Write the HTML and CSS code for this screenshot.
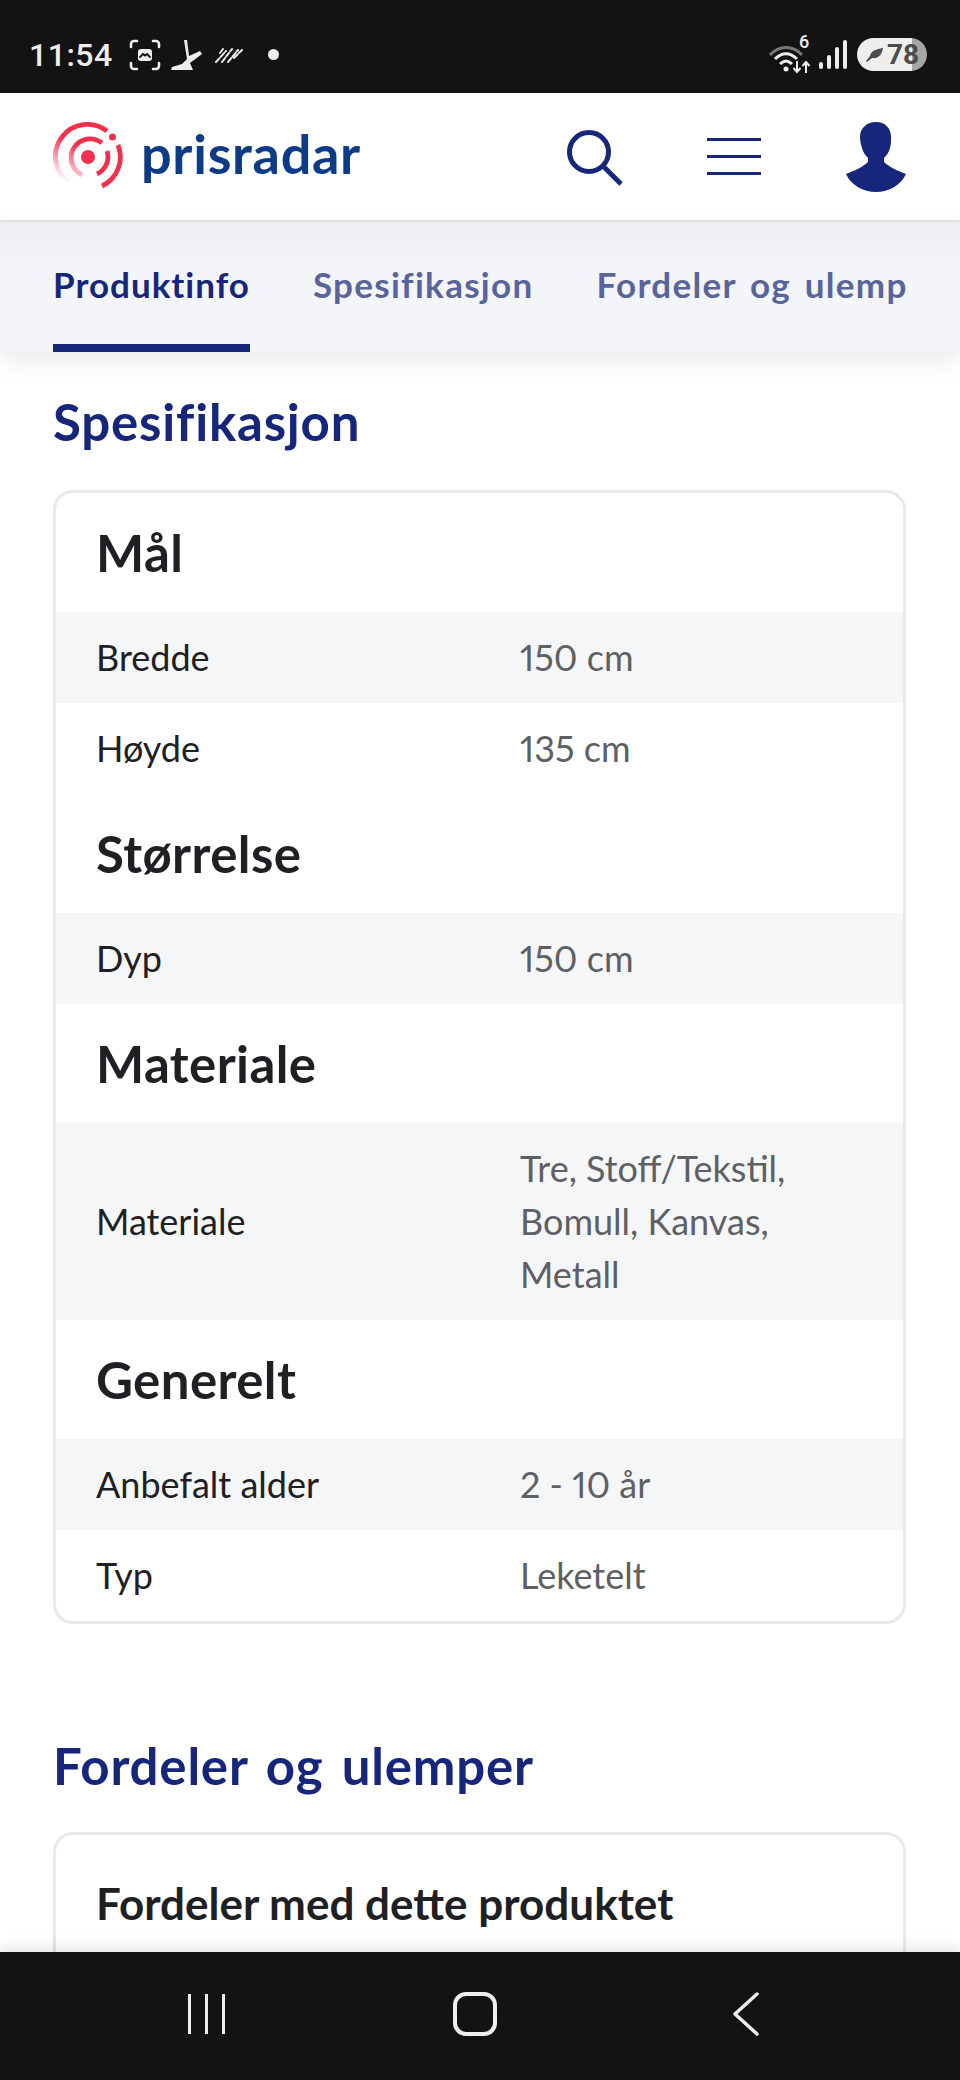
FILE: index.html
```html
<!DOCTYPE html>
<html>
<head>
  <title>Prisradar - Spesifikasjon</title>
  <link rel="stylesheet" href="styles.css">
</head>
<body>
  <div class="phone">
    <!-- Android status bar -->
    <div class="statusbar">
      <span class="clock">11:54</span>
      <svg class="st-shot" viewBox="0 0 32 32" fill="none" stroke="#eee" stroke-width="2.6" stroke-linecap="round">
        <path d="M2 8V5a3 3 0 0 1 3-3h3M24 2h3a3 3 0 0 1 3 3v3M30 24v3a3 3 0 0 1-3 3h-3M8 30H5a3 3 0 0 1-3-3v-3"/>
        <rect x="9" y="10" width="14" height="12" rx="3" fill="#eee" stroke="none"/>
        <path d="M11 18l3-3 2 1.500 2-1.500 3 3" stroke="#131313" stroke-width="1.800"/>
      </svg>
      <svg class="st-figure" viewBox="0 0 32 32" fill="#eee">
        <path d="M14 1L17 1L19 17L30 12L32 15L20 24L23 31L1 31L2 28L12 25L17 20Z"/>
      </svg>
      <svg class="st-stripes" viewBox="0 0 28 16" stroke="#eee" stroke-width="2" stroke-linecap="round" stroke-dasharray="5 2">
        <path d="M1 15L11 4M7 15L17 2M13 15L23 3M19 11L27 3M5 6L8 2"/>
      </svg>
      <span class="st-dot"></span>
      <span class="st-right">
        <svg class="st-wifi" viewBox="0 0 42 30" fill="none">
          <path d="M1 11C10 1 24 1 33 11" stroke="#777" stroke-width="3"/>
          <path d="M6 15C13 8 21 8 28 15" stroke="#eee" stroke-width="3"/>
          <path d="M11 20C15 16 19 16 23 20" stroke="#eee" stroke-width="3"/>
          <circle cx="17" cy="25" r="2.500" fill="#eee"/>
          <path d="M28 17v11m-3.500-4l3.500 4 3.500-4M37 29V18m-3.500 4l3.500-4 3.500 4" stroke="#eee" stroke-width="2"/>
        </svg>
        <span class="st-six">6</span>
        <span class="st-signal">
          <i class="bar bar-1"></i><i class="bar bar-2"></i><i class="bar bar-3"></i><i class="bar bar-4"></i>
        </span>
        <span class="battery">
          <svg class="st-leaf" viewBox="0 0 18 14" fill="#4c4c4c">
            <path d="M5 8C6 3 11 1 18 0 17 7 13 11 7 10L2 14 1 13z"/>
          </svg>
          <span class="battery-level">78</span>
        </span>
      </span>
    </div>

    <!-- Site header -->
    <header class="site-header">
      <div class="logo">
        <svg class="logo-mark" viewBox="0 0 72 72" fill="none" stroke-width="4.800">
          <defs>
            <linearGradient id="fade" gradientUnits="userSpaceOnUse" x1="30" y1="26" x2="12" y2="60">
              <stop offset="0" stop-color="#f1304f"/>
              <stop offset="1" stop-color="#f1304f" stop-opacity="0"/>
            </linearGradient>
          </defs>
          <path d="M55 10A32 32 0 1 0 16 61" stroke="url(#fade)"/>
          <path d="M50 22A19 19 0 1 0 30 54" stroke="url(#fade)"/>
          <path d="M66 24A32 32 0 0 1 50 65" stroke="#f1304f"/>
          <path d="M55 30A19 19 0 0 1 45 53" stroke="#f1304f"/>
          <circle cx="60.500" cy="16" r="3.500" fill="#f1304f"/>
          <circle cx="36" cy="36" r="7" fill="#f1304f"/>
        </svg>
        <span class="logo-text">prisradar</span>
      </div>
      <div class="header-icons">
        <svg class="icon-search" viewBox="0 0 56 56" fill="none" stroke="#16267a" stroke-width="5">
          <circle cx="22" cy="22" r="19.500"/>
          <path d="M36 36l18 18"/>
        </svg>
        <div class="icon-menu"><span></span><span></span><span></span></div>
        <svg class="icon-user" viewBox="0 0 62 72" fill="#16267a">
          <path d="M31 1C40 1 46 7 46 16C46 20 46 24 45 27C44 31 42 34 39 37L39 41C44 46 53 50 61 53C56 64 44 71 31 71C18 71 6 64 1 53C9 50 18 46 23 41L23 37C20 34 18 31 17 27C16 24 15 20 15 16C15 7 22 1 31 1Z"/>
        </svg>
      </div>
    </header>

    <!-- Section tabs -->
    <nav class="tabs">
      <div class="tabs-scroll">
        <a class="tab active">Produktinfo</a>
        <a class="tab">Spesifikasjon</a>
        <a class="tab">Fordeler og ulemper</a>
      </div>
    </nav>

    <main class="content">
      <h2 class="section-title">Spesifikasjon</h2>
      <div class="card">
        <h3 class="group-title">Mål</h3>
        <div class="row row-alt"><span class="row-label">Bredde</span><span class="row-value">150 cm</span></div>
        <div class="row"><span class="row-label">Høyde</span><span class="row-value">135 cm</span></div>
        <h3 class="group-title">Størrelse</h3>
        <div class="row row-alt"><span class="row-label">Dyp</span><span class="row-value">150 cm</span></div>
        <h3 class="group-title">Materiale</h3>
        <div class="row row-alt"><span class="row-label">Materiale</span><span class="row-value">Tre, Stoff/Tekstil, Bomull, Kanvas, Metall</span></div>
        <h3 class="group-title">Generelt</h3>
        <div class="row row-alt"><span class="row-label">Anbefalt alder</span><span class="row-value">2 - 10 år</span></div>
        <div class="row"><span class="row-label">Typ</span><span class="row-value">Leketelt</span></div>
      </div>

      <h2 class="section-title second">Fordeler og ulemper</h2>
      <div class="card card-pros">
        <h4 class="pros-title">Fordeler med dette produktet</h4>
      </div>
    </main>

    <!-- Android navigation bar -->
    <div class="navbar">
      <div class="nav-recent"><span></span><span></span><span></span></div>
      <div class="nav-home"></div>
      <svg class="nav-back" viewBox="0 0 28 44" fill="none" stroke="#eee" stroke-width="3.500" stroke-linecap="round" stroke-linejoin="round">
        <path d="M25 2L3 22l22 20"/>
      </svg>
    </div>
  </div>
</body>
</html>
```

FILE: styles.css
```css
/* Page frame */
body {
  margin: 0;
  font-family: "Lato", "Noto Sans", sans-serif;
  background: #fff;
}

.phone {
  display: flex;
  flex-direction: column;
  width: 960px;
  height: 2080px;
  overflow: hidden;
}

/* Status bar */
.statusbar {
  display: flex;
  align-items: center;
  flex: none;
  height: 93px;
  padding: 16px 33px 0 29px;
  box-sizing: border-box;
  background: #131313;
  color: #eee;
}

.clock {
  font-family: "Roboto", sans-serif;
  font-size: 32px;
  font-weight: 500;
  letter-spacing: 0.5px;
  width: 100px;
}

.st-shot { width: 32px; height: 32px; }
.st-figure { width: 32px; height: 32px; margin-left: 9px; }
.st-stripes { width: 28px; height: 16px; margin-left: 13px; }

.st-dot {
  width: 11px;
  height: 11px;
  margin-left: 25px;
  border-radius: 50%;
  background: #eee;
}

.st-right {
  display: flex;
  align-items: center;
  margin-left: auto;
  position: relative;
}

.st-wifi { width: 42px; height: 30px; margin-top: 8px; }

.st-six {
  position: absolute;
  left: 30px;
  top: -5px;
  font-family: "Roboto", sans-serif;
  font-size: 18px;
  font-weight: 500;
}

.st-signal {
  display: flex;
  align-items: flex-end;
  gap: 4px;
  height: 29px;
  margin-left: 8px;
}

.bar {
  width: 4px;
  border-radius: 2px;
  background: #eee;
}

.bar-1 { height: 7px; }
.bar-2 { height: 14px; }
.bar-3 { height: 22px; }
.bar-4 { height: 29px; }

.battery {
  display: flex;
  align-items: center;
  gap: 4px;
  width: 70px;
  height: 33px;
  margin-left: 10px;
  padding-left: 8px;
  box-sizing: border-box;
  border-radius: 17px;
  background: linear-gradient(90deg, #eee 55px, #a6a6a6 55px);
}

.st-leaf { width: 18px; height: 14px; }

.battery-level {
  font-family: "Roboto", sans-serif;
  font-size: 28px;
  font-weight: 700;
  color: #4c4c4c;
}

/* Header with logo and icons */
.site-header {
  display: flex;
  align-items: center;
  justify-content: space-between;
  flex: none;
  height: 129px;
  padding: 0 53px 0 52px;
  box-sizing: border-box;
  background: #fff;
  border-bottom: 2px solid #e2e3e4;
}

.logo {
  display: flex;
  align-items: center;
  gap: 17px;
}

.logo-mark { width: 72px; height: 72px; }

.logo-text {
  font-size: 54px;
  font-weight: 700;
  line-height: 1;
  letter-spacing: 0.7px;
  color: #0d3b87;
  margin-top: -6px;
}

.header-icons {
  display: flex;
  align-items: center;
}

.icon-search { width: 56px; height: 56px; margin-top: 2px; }

.icon-menu {
  display: flex;
  flex-direction: column;
  gap: 14.5px;
  width: 54px;
  margin-left: 84px;
}

.icon-menu span {
  height: 2.5px;
  background: #16267a;
}

.icon-user { width: 62px; height: 72px; margin-left: 84px; }

/* Tabs */
.tabs {
  flex: none;
  height: 130px;
  padding: 0 54px 0 53px;
  box-sizing: border-box;
  background: linear-gradient(#ebeef0, #f4f5f8 40%);
  box-shadow: 0 10px 24px rgba(0, 0, 0, 0.08);
  position: relative;
}

.tabs-scroll {
  display: flex;
  gap: 63px;
  height: 100%;
  overflow: hidden;
}

.tab {
  flex: none;
  padding-top: 42px;
  box-sizing: border-box;
  font-size: 35px;
  font-weight: 700;
  line-height: 40px;
  letter-spacing: 1.3px;
  word-spacing: 4px;
  color: #59649c;
  white-space: nowrap;
}

.tab.active {
  letter-spacing: 1px;
  color: #16267a;
  border-bottom: 8px solid #16267a;
}

/* Main content */
.content {
  flex: 1;
  overflow: hidden;
  padding: 0 54px 0 53px;
}

.section-title {
  margin: 0;
  padding-top: 38px;
  font-size: 51px;
  font-weight: 700;
  line-height: 64px;
  letter-spacing: 0.8px;
  word-spacing: 5px;
  color: #16267a;
}

.section-title.second {
  padding-top: 110px;
}

.card {
  margin-top: 36px;
  border: 3px solid #e9e9ea;
  border-radius: 20px;
  overflow: hidden;
}

.section-title.second + .card {
  margin-top: 34px;
}

.group-title {
  margin: 0;
  padding: 0 40px;
  font-size: 51px;
  font-weight: 700;
  line-height: 119px;
  letter-spacing: 0.4px;
  color: #1f2023;
}

.row {
  display: flex;
  align-items: center;
  min-height: 91px;
  padding: 19px 40px;
  box-sizing: border-box;
  font-size: 36px;
  line-height: 53px;
  font-variant-numeric: proportional-nums;
}

.row-alt {
  background: #f5f6f8;
}

.row-label {
  flex: none;
  width: 424px;
  color: #1f2023;
}

.row-value {
  width: 300px;
  color: #5e6064;
}

.card-pros {
  height: 300px;
}

.pros-title {
  margin: 0;
  padding: 40px 40px 0;
  font-size: 44px;
  font-weight: 700;
  line-height: 56px;
  color: #1f2023;
}

/* Navigation bar */
.navbar {
  position: relative;
  display: flex;
  align-items: center;
  flex: none;
  height: 128px;
  padding-bottom: 4px;
  box-sizing: border-box;
  background: #131313;
  box-shadow: 0 -5px 14px rgba(0, 0, 0, 0.1);
}

.nav-recent {
  display: flex;
  justify-content: space-between;
  width: 37px;
  height: 40px;
  margin-left: 188px;
}

.nav-recent span {
  width: 3px;
  background: #eee;
}

.nav-home {
  width: 36px;
  height: 36px;
  margin-left: 228px;
  border: 4px solid #eee;
  border-radius: 13px;
}

.nav-back {
  width: 28px;
  height: 44px;
  margin-left: 235px;
}
```
